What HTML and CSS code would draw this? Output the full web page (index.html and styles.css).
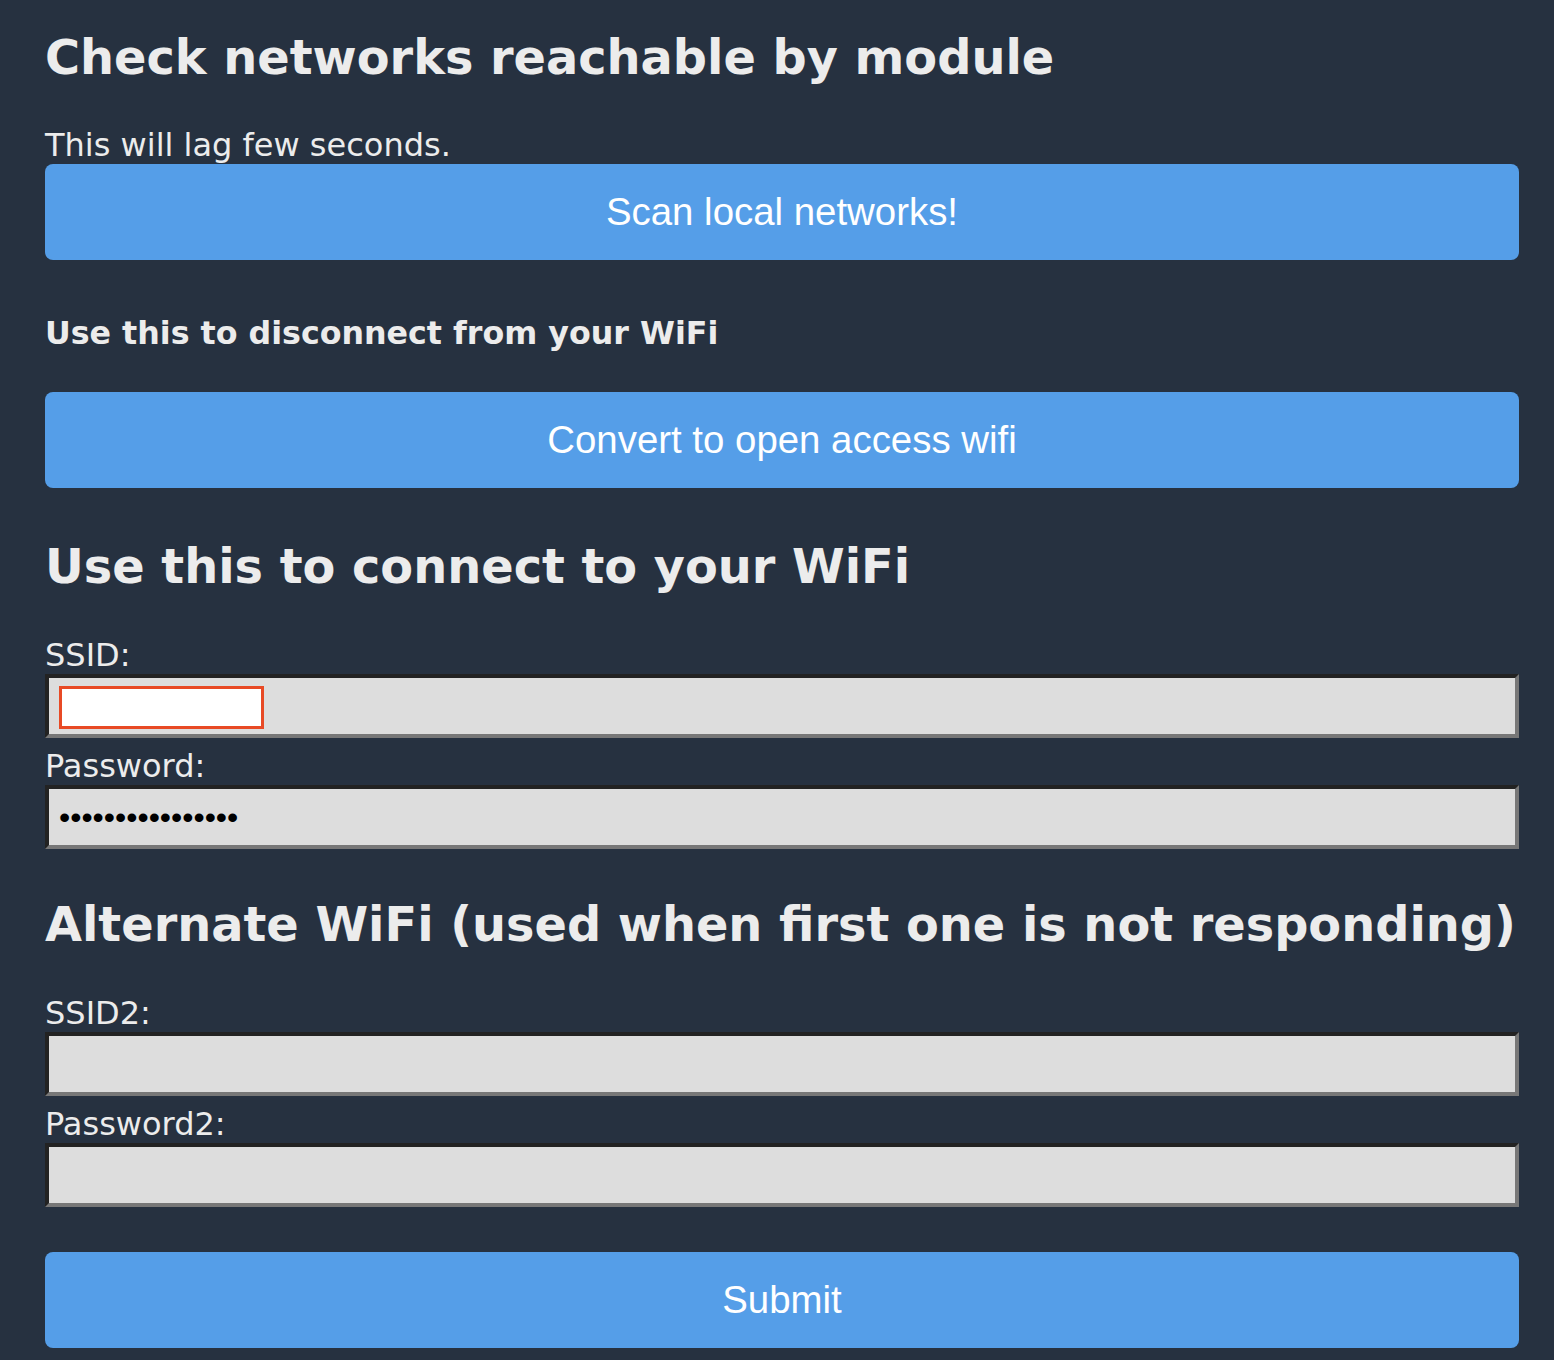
FILE: index.html
```html
<!DOCTYPE html>
<html lang="en">
<head>
<meta charset="utf-8">
<title>WiFi settings</title>
<link rel="stylesheet" href="styles.css">
</head>
<body>
<main class="page">
  <h1 class="title title-first">Check networks reachable by module</h1>
  <p class="note">This will lag few seconds.</p>
  <button class="btn" type="button">Scan local networks!</button>

  <h3 class="subtitle">Use this to disconnect from your WiFi</h3>
  <button class="btn btn-open" type="button">Convert to open access wifi</button>

  <form class="form">
    <h1 class="title title-connect">Use this to connect to your WiFi</h1>
    <label class="label label-first" for="ssid">SSID:</label>
    <div class="field-wrap">
      <input class="field" id="ssid" type="text">
      <span class="highlight"></span>
    </div>
    <label class="label" for="pass">Password:</label>
    <input class="field" id="pass" type="password" value="abcdefghijklmnop">

    <h1 class="title title-alt">Alternate WiFi (used when first one is not responding)</h1>
    <label class="label label-first" for="ssid2">SSID2:</label>
    <input class="field" id="ssid2" type="text">
    <label class="label" for="pass2">Password2:</label>
    <input class="field" id="pass2" type="password">

    <button class="btn btn-submit" type="submit">Submit</button>
  </form>
</main>
</body>
</html>
```

FILE: styles.css
```css
html, body {
  margin: 0;
  padding: 0;
  background: #263140;
}

body {
  color: #ececec;
  font-family: "DejaVu Sans", Verdana, sans-serif;
}

.page {
  padding: 30px 35px 12px 45px;
  display: flex;
  flex-direction: column;
}

.form {
  display: flex;
  flex-direction: column;
  margin: 0;
}

.title {
  margin: 0;
  font-size: 47.8px;
  line-height: 56px;
  font-weight: bold;
  white-space: nowrap;
}

.title-connect { margin-top: 51px; }
.title-alt { margin-top: 48px; }

.note {
  margin: 41px 0 0;
  font-size: 32px;
  line-height: 37px;
}

.subtitle {
  margin: 55px 0 0;
  font-size: 31.7px;
  line-height: 37px;
  font-weight: bold;
}

.btn {
  display: block;
  width: 100%;
  height: 96px;
  margin: 0;
  border: 0;
  border-radius: 8px;
  background: #559ee8;
  color: #ffffff;
  font-family: "Liberation Sans", Arial, sans-serif;
  font-size: 38.4px;
  padding: 0;
}

.btn-open { margin-top: 40px; }
.btn-submit { margin-top: 45px; }

.label {
  display: block;
  margin-top: 8px;
  padding-top: 2px;
  font-size: 32px;
  line-height: 37px;
}

.label-first { margin-top: 40px; }

.field-wrap {
  position: relative;
}

.field {
  display: block;
  box-sizing: border-box;
  width: 100%;
  height: 64px;
  margin: 0;
  padding: 0 10px;
  border-style: solid;
  border-width: 4px;
  border-color: #222222 #777777 #777777 #222222;
  background: #dddddd;
  color: #000000;
  font-family: "Liberation Sans", Arial, sans-serif;
  font-size: 32px;
  outline: none;
}

.highlight {
  position: absolute;
  left: 14px;
  top: 12px;
  width: 205px;
  height: 43px;
  box-sizing: border-box;
  border: 3px solid #e84a25;
  background: #ffffff;
}
```
